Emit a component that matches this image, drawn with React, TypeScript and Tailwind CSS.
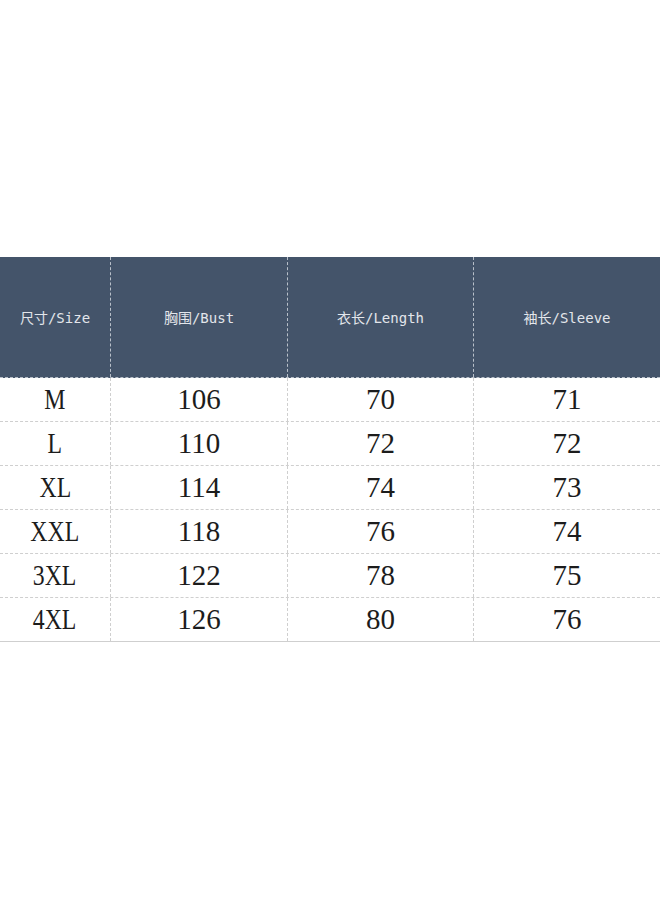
import React from "react";

const headers = ["尺寸/Size", "胸围/Bust", "衣长/Length", "袖长/Sleeve"];

const rows: string[][] = [
  ["M", "106", "70", "71"],
  ["L", "110", "72", "72"],
  ["XL", "114", "74", "73"],
  ["XXL", "118", "76", "74"],
  ["3XL", "122", "78", "75"],
  ["4XL", "126", "80", "76"],
];

const cols = "grid grid-cols-[110px_177px_186px_187px]";

const App: React.FC = () => {
  return (
    <div className="w-[660px] h-[900px] bg-white pt-[257px]">
      <div className={`${cols} bg-[#44546a] border-b border-dashed border-[#b9c0ca]`}>
        {headers.map((h, i) => (
          <div
            key={h}
            className={`h-[120px] flex items-center justify-center pt-[3px] text-[14px] text-[#e3e6eb] border-dashed border-[#b9c0ca] ${
              i > 0 ? "border-l" : ""
            }`}
            style={{ fontFamily: '"DejaVu Sans Mono", "Noto Sans CJK SC", monospace' }}
          >
            {h}
          </div>
        ))}
      </div>
      {rows.map((row, r) => (
        <div
          key={r}
          className={`${cols} border-b border-[#cfcfcf] ${
            r === rows.length - 1 ? "border-solid" : "border-dashed"
          }`}
        >
          {row.map((cell, c) => (
            <div
              key={c}
              className={`h-[43px] flex items-center justify-center text-[29px] text-[#1c1c1c] border-dashed border-[#cfcfcf] ${
                c > 0 ? "border-l" : ""
              }`}
              style={{ fontFamily: '"Liberation Serif", serif' }}
            >
              <span className={c === 0 ? "inline-block scale-x-[0.82]" : ""}>{cell}</span>
            </div>
          ))}
        </div>
      ))}
    </div>
  );
};

export default App;
